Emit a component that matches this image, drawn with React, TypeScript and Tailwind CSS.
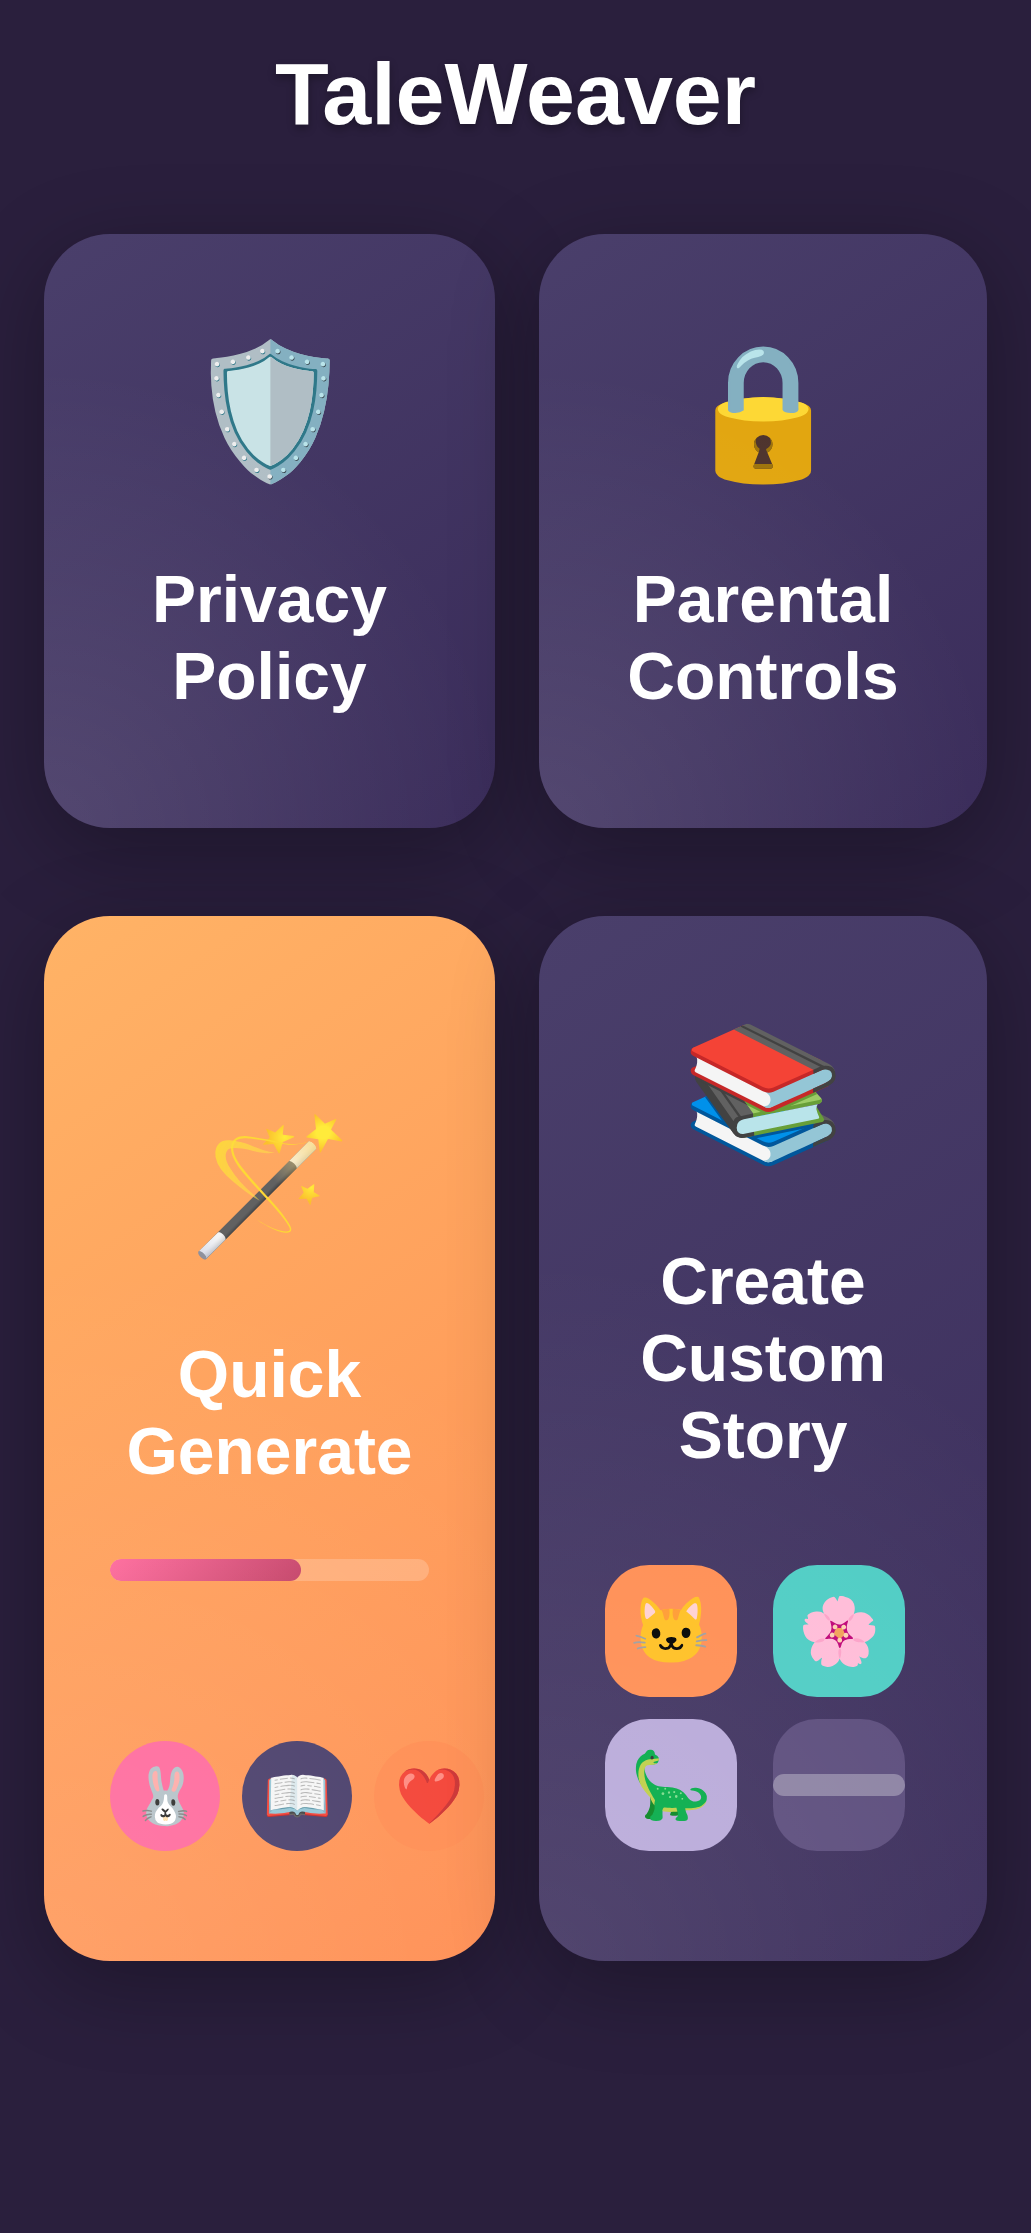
import React from "react";

const purple = "bg-[linear-gradient(145deg,#4a3f6b_0%,#3a2c5a_100%)]";
const orange = "bg-[linear-gradient(145deg,#ffb366_0%,#ff8e53_100%)]";

type CardProps = {
  icon: string;
  title: string;
  className: string;
  children?: React.ReactNode;
};

function Card({ icon, title, className, children }: CardProps) {
  return (
    <section
      className={`relative flex flex-col items-center overflow-hidden rounded-[66px] px-[66px] pb-[66px] text-center shadow-[0_22px_88px_rgba(0,0,0,0.3)] before:pointer-events-none before:absolute before:inset-0 before:bg-[radial-gradient(circle_at_0%_100%,rgba(255,255,255,0.1)_0%,transparent_62%)] ${className}`}
    >
      <div className="text-[132px] leading-[224px]" aria-hidden="true">
        {icon}
      </div>
      <h2 className="mt-[37px] mb-[47px] text-[66px] leading-[77px] font-bold">{title}</h2>
      {children}
    </section>
  );
}

function Badge({ icon, className }: { icon: string; className: string }) {
  return (
    <span className={`flex size-[110px] shrink-0 items-center justify-center rounded-full text-[55px] ${className}`}>
      {icon}
    </span>
  );
}

function Tile({ icon, className }: { icon: string; className: string }) {
  return (
    <span className={`flex size-[132px] items-center justify-center rounded-[44px] text-[66px] ${className}`}>
      {icon}
    </span>
  );
}

export default function App() {
  return (
    <div className="min-h-screen bg-[#2a1f3d] px-11 pt-[43px] font-['Liberation_Sans',Arial,sans-serif] text-white">
      <h1 className="text-center text-[88px] leading-[101px] font-bold [text-shadow:0_4px_8px_rgba(0,0,0,0.3)]">
        TaleWeaver
      </h1>
      <main className="mt-[90px] grid grid-cols-[451fr_448fr] gap-x-11 gap-y-[88px]">
        <Card icon="🛡️" title="Privacy Policy" className={`pt-[66px] ${purple}`} />
        <Card icon="🔒" title="Parental Controls" className={`pt-[66px] ${purple}`} />
        <Card icon="🪄" title="Quick Generate" className={`pt-[159px] ${orange}`}>
          <div
            role="progressbar"
            aria-label="Story generation"
            aria-valuenow={60}
            aria-valuemin={0}
            aria-valuemax={100}
            className="mt-[22px] h-[22px] w-full shrink-0 overflow-hidden rounded-[11px] bg-white/20"
          >
            <div className="h-full w-3/5 rounded-[11px] bg-[linear-gradient(135deg,#ff6b9d_0%,#c44569_100%)]" />
          </div>
          <div className="mt-40 mb-11 flex gap-[22px] self-start">
            <Badge icon="🐰" className="bg-[#ff6b9d]" />
            <Badge icon="📖" className="bg-[#4a3f6b]" />
            <Badge icon="❤️" className="bg-[#ff8e53]" />
          </div>
        </Card>
        <Card icon="📚" title="Create Custom Story" className={`pt-[66px] ${purple}`}>
          <div className="mt-11 mb-11 grid w-full grid-cols-2 gap-x-5 gap-y-[22px]">
            <Tile icon="🐱" className="bg-[#ff8e53]" />
            <Tile icon="🌸" className="bg-[#4ecdc4]" />
            <Tile icon="🦕" className="bg-[#b8a9d9]" />
            <div className="flex size-[132px] items-center rounded-[44px] bg-[#5b4c7c]">
              <div className="h-[22px] w-full rounded-[11px] bg-white/30" />
            </div>
          </div>
        </Card>
      </main>
    </div>
  );
}
